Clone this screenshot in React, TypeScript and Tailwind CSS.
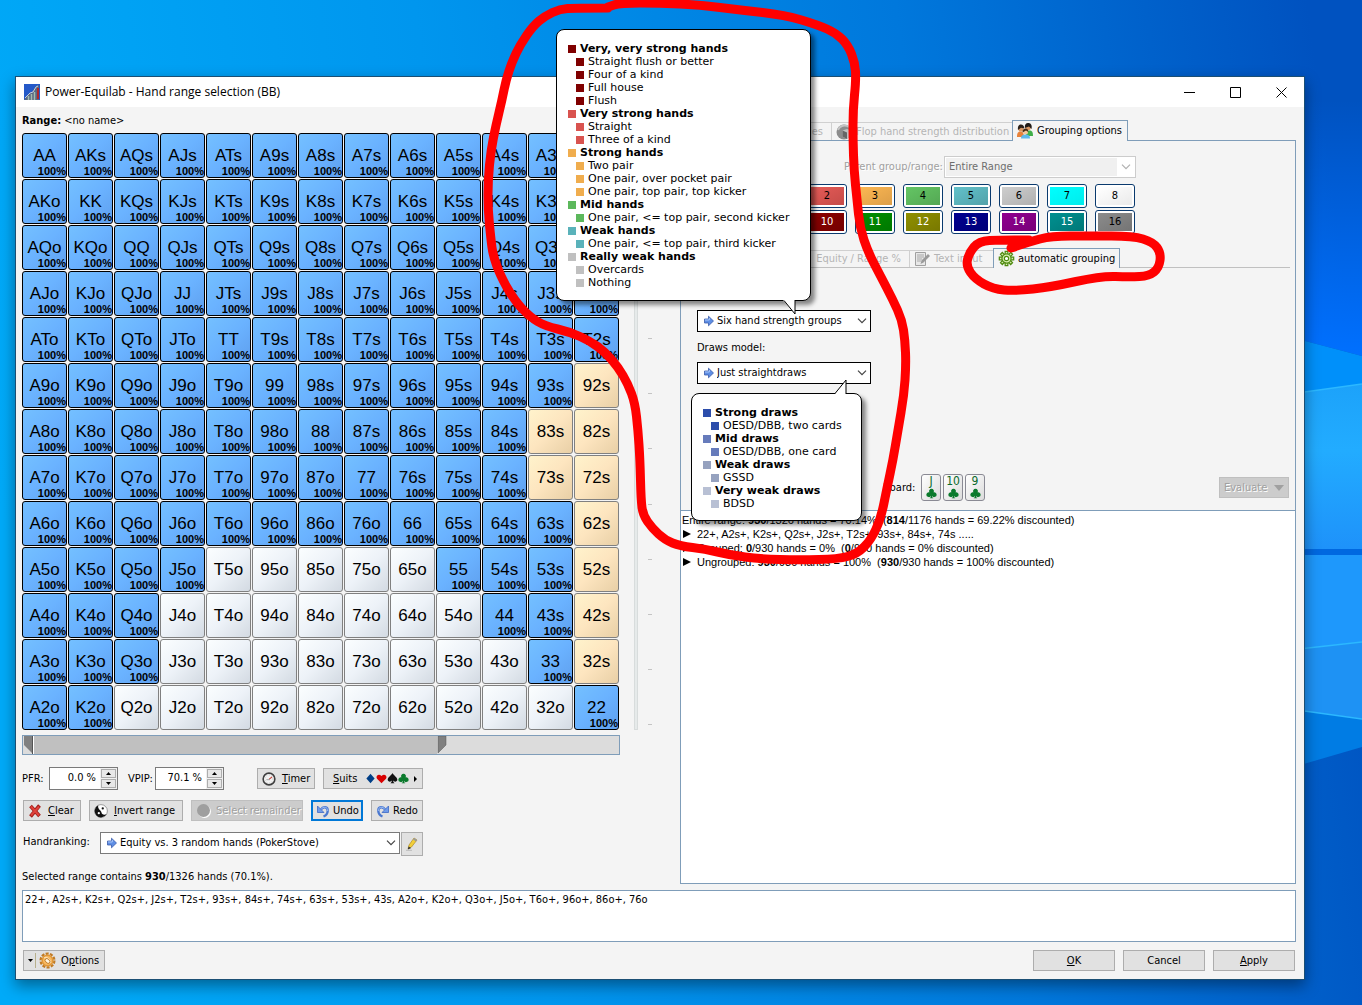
import React from 'react';

const RANKS = ['A', 'K', 'Q', 'J', 'T', '9', '8', '7', '6', '5', '4', '3', '2'];

// selected columns of each row, as start/end pairs
const SELECTED: number[][] = [
  [0, 12],
  [0, 12],
  [0, 12],
  [0, 12],
  [0, 12],
  [0, 11],
  [0, 10],
  [0, 10],
  [0, 11],
  [0, 3, 9, 11],
  [0, 2, 10, 11],
  [0, 2, 11, 11],
  [0, 1, 12, 12],
];

function isSelected(row: number, col: number) {
  const r = SELECTED[row];
  return (col >= r[0] && col <= r[1]) || (r.length > 2 && col >= r[2] && col <= r[3]);
}

function handName(row: number, col: number) {
  if (row === col) return RANKS[row] + RANKS[row];
  return row < col ? RANKS[row] + RANKS[col] + 's' : RANKS[col] + RANKS[row] + 'o';
}

type Line = { text: string; color: string; sub?: boolean };

const STRENGTH_LINES: Line[] = [
  { text: 'Very, very strong hands', color: 'bg-[#800000]' },
  { text: 'Straight flush or better', color: 'bg-[#800000]', sub: true },
  { text: 'Four of a kind', color: 'bg-[#800000]', sub: true },
  { text: 'Full house', color: 'bg-[#800000]', sub: true },
  { text: 'Flush', color: 'bg-[#800000]', sub: true },
  { text: 'Very strong hands', color: 'bg-[#d9534f]' },
  { text: 'Straight', color: 'bg-[#d9534f]', sub: true },
  { text: 'Three of a kind', color: 'bg-[#d9534f]', sub: true },
  { text: 'Strong hands', color: 'bg-[#f0ad4e]' },
  { text: 'Two pair', color: 'bg-[#f0ad4e]', sub: true },
  { text: 'One pair, over pocket pair', color: 'bg-[#f0ad4e]', sub: true },
  { text: 'One pair, top pair, top kicker', color: 'bg-[#f0ad4e]', sub: true },
  { text: 'Mid hands', color: 'bg-[#5cb85c]' },
  { text: 'One pair, <= top pair, second kicker', color: 'bg-[#5cb85c]', sub: true },
  { text: 'Weak hands', color: 'bg-[#5ab2ba]' },
  { text: 'One pair, <= top pair, third kicker', color: 'bg-[#5ab2ba]', sub: true },
  { text: 'Really weak hands', color: 'bg-[#c0c0c0]' },
  { text: 'Overcards', color: 'bg-[#c0c0c0]', sub: true },
  { text: 'Nothing', color: 'bg-[#c0c0c0]', sub: true },
];

const DRAW_LINES: Line[] = [
  { text: 'Strong draws', color: 'bg-[#2c4dab]' },
  { text: 'OESD/DBB, two cards', color: 'bg-[#2c4dab]', sub: true },
  { text: 'Mid draws', color: 'bg-[#667bbb]' },
  { text: 'OESD/DBB, one card', color: 'bg-[#667bbb]', sub: true },
  { text: 'Weak draws', color: 'bg-[#96a2bf]' },
  { text: 'GSSD', color: 'bg-[#96a2bf]', sub: true },
  { text: 'Very weak draws', color: 'bg-[#b8c0d4]' },
  { text: 'BDSD', color: 'bg-[#b8c0d4]', sub: true },
];

const GROUPS = [
  { n: 1, cls: 'from-[#4a8ad8] to-[#3a74bc] text-black' },
  { n: 2, cls: 'from-[#e65c58] to-[#c54b48] text-black' },
  { n: 3, cls: 'from-[#fdb853] to-[#dc9e48] text-black' },
  { n: 4, cls: 'from-[#64c564] to-[#54a854] text-black' },
  { n: 5, cls: 'from-[#62c1ca] to-[#52a2aa] text-black' },
  { n: 6, cls: 'from-[#cecece] to-[#b0b0b0] text-black' },
  { n: 7, cls: 'from-[#00ffff] to-[#00ecec] text-black' },
  { n: 8, cls: 'from-[#ffffff] to-[#eaeaea] text-black' },
  { n: 9, cls: 'from-[#303030] to-[#000000] text-white' },
  { n: 10, cls: 'from-[#8c0000] to-[#740000] text-white' },
  { n: 11, cls: 'from-[#009000] to-[#007800] text-white' },
  { n: 12, cls: 'from-[#909000] to-[#787800] text-white' },
  { n: 13, cls: 'from-[#000090] to-[#000078] text-white' },
  { n: 14, cls: 'from-[#900090] to-[#780078] text-white' },
  { n: 15, cls: 'from-[#009090] to-[#007878] text-white' },
  { n: 16, cls: 'from-[#8c8c8c] to-[#747474] text-black' },
];

const BTN_BASE = 'flex h-[21px] items-center whitespace-nowrap';
const BTN = `${BTN_BASE} border border-[#adadad] bg-[#e1e1e1]`;
const BTN_OFF = `${BTN_BASE} border border-[#bfbfbf] bg-[#cccccc] text-[#a0a0a0] [text-shadow:1px_1px_0_#fff]`;
const BTN_FOCUS = `${BTN_BASE} border-2 border-[#0078d7] bg-[#e1e1e1]`;

const DIAMOND = 'M8 1l6 7-6 7-6-7z';
const HEART = 'M8 15L1.500 8.500C-1 5 3.500 0 8 4.500c4.500-4.500 9 .5 6.500 4z';
const SPADE = 'M8 0C9 3 15 6 15 9.500c0 3.500-4.500 4-6 1.500 0 2 1 3.500 2 4H5c1-.5 2-2 2-4-1.500 2.500-6 2-6-1.500C1 6 7 3 8 0z';
const CLUB =
  'M8 1a3.400 3.400 0 0 0-2.900 5.300A3.500 3.500 0 1 0 7.300 11.200C7.200 13 6.500 14.200 5 15h6c-1.500-.8-2.200-2-2.300-3.800a3.500 3.500 0 1 0 2.200-4.900A3.400 3.400 0 0 0 8 1z';

function ArrowIcon() {
  return (
    <svg viewBox="0 0 12 12" className="h-3 w-3 shrink-0">
      <path d="M1.500 4h4V1.200L10.500 6l-5 4.800V8h-4z" fill="#5e8ee4" stroke="#3a5cab" strokeWidth=".8" />
      <path d="M2 5h4.300V3" fill="none" stroke="#a9c8fb" strokeWidth="1" />
    </svg>
  );
}

function AppIcon() {
  return (
    <svg viewBox="0 0 16 16" className="h-4 w-4 shrink-0">
      <rect width="16" height="16" fill="#2459c8" />
      <path d="M0 16L5 10l3-2 4-6 3-1v15z" fill="#5a6880" />
      <path d="M4.500 16v-4M7.500 16v-6M10.500 16V8" stroke="#a2bcae" strokeWidth="1.500" />
      <path d="M14 15V4" stroke="#b02a2a" strokeWidth="2" />
      <path d="M1 14l5-5 3-1 3-5 2-1" fill="none" stroke="#c5cede" strokeWidth="1" />
    </svg>
  );
}

function PeopleIcon() {
  return (
    <svg viewBox="0 0 16 16" className="h-4 w-4 shrink-0">
      <path d="M0 14c0-4 1-5.500 3.500-5.500S7 11 7 14z" fill="#e8823a" />
      <path d="M9 13c0-4 1-5.500 3.500-5.500S16 9 16 13z" fill="#3fae48" />
      <circle cx="4" cy="6" r="2.600" fill="#d99560" />
      <circle cx="11" cy="4.500" r="2.800" fill="#d99560" />
      <path d="M1 7c-.5-4 1-5.500 3-5.500s3 1 3.300 4L4 4.800z" fill="#2b2018" />
      <path d="M7.800 5C7.500 1.500 9 0 11 0s4.500 1 3.500 6l-2.500-2.500z" fill="#1f1a16" />
      <circle cx="8.500" cy="9" r="2.500" fill="#f5c79c" />
      <path d="M5.500 9.500C5.500 6.500 7 5.500 8.500 5.500s3 1 2.800 3.500L9 7.500z" fill="#4a2c14" />
      <path d="M4 15.500c0-3 1.500-4 4.500-4s4.500 1 4.500 4z" fill="#5cb8ee" />
    </svg>
  );
}

function CubeIcon() {
  return (
    <svg viewBox="0 0 16 16" className="h-4 w-4 shrink-0">
      <circle cx="8" cy="8" r="7.500" fill="#8c8c8c" />
      <path d="M2 6a7 7 0 0 1 11-3" fill="none" stroke="#c4c4c4" strokeWidth="2" />
      <path d="M6.500 6.500l4.500-1.500 4.500 1.500v6L11 15l-4.500-2.500z" fill="#c2c2c2" />
      <path d="M6.500 6.500L11 8.500V15l-4.500-2.500z" fill="#666" />
    </svg>
  );
}

function NoteIcon() {
  return (
    <svg viewBox="0 0 16 16" className="h-4 w-4 shrink-0">
      <path d="M1.500 1.500h10v13h-10z" fill="#e8e8e8" stroke="#a0a0a0" />
      <path d="M3 4h7M3 6h7M3 8h5M3 10h4" stroke="#a8a8a8" />
      <path d="M6.500 13l1-3.500L14 3l2 2-6.500 6.500z" fill="#9a9a9a" />
    </svg>
  );
}

function GearIcon({ color, fill }: { color: string; fill: string }) {
  return (
    <svg viewBox="0 0 18 18" className="h-[17px] w-[17px] shrink-0">
      {[0, 45, 90, 135, 180, 225, 270, 315].map((a) => (
        <path key={a} d="M7.600 4.200V1.400h2.800v2.800" fill={fill} stroke={color} strokeWidth="1.300" transform={`rotate(${a} 9 9)`} />
      ))}
      <circle cx="9" cy="9" r="4.800" fill={fill} stroke={color} strokeWidth="1.300" />
      <circle cx="9" cy="9" r="2.300" fill="#fff" stroke={color} strokeWidth="1.200" />
    </svg>
  );
}

function OptionsIcon() {
  return (
    <svg viewBox="0 0 18 18" className="h-[17px] w-[17px] shrink-0">
      <circle cx="9" cy="9" r="7.300" fill="none" stroke="#c07a24" strokeWidth="2.400" strokeDasharray="3.200 1.400" />
      <circle cx="9" cy="9" r="5.600" fill="#f8b860" stroke="#e09838" strokeWidth="1.600" />
      <path d="M5.500 6.500C8 4.500 11.500 8 12.500 11.500" fill="none" stroke="#fbe0b4" strokeWidth="1.500" />
      <ellipse cx="9" cy="9.500" rx="3" ry="2" fill="#fff4e0" stroke="#b87420" strokeWidth=".9" transform="rotate(45 9 9.500)" />
    </svg>
  );
}

function ClockIcon() {
  return (
    <svg viewBox="0 0 16 16" className="h-[14px] w-[14px] shrink-0">
      <circle cx="8" cy="8" r="6.700" fill="#f2f2f2" stroke="#3f3f3f" strokeWidth="1.800" />
      <circle cx="8" cy="8" r="4.600" fill="none" stroke="#b9b9b9" strokeDasharray="1 2" />
      <path d="M11.500 5.500L8 8.500" stroke="#c23a2e" strokeWidth="1.200" />
      <path d="M5 8.800h4" stroke="#999" />
    </svg>
  );
}

function CrossIcon() {
  return (
    <svg viewBox="0 0 14 14" className="h-[14px] w-[14px] shrink-0">
      <path d="M2.500 2L11.500 12M11.500 1.500L2.500 12.500" stroke="#a11c18" strokeWidth="3.600" />
      <path d="M3 2.500L11 11.500M11 2.500L3 11.500" stroke="#e0423c" strokeWidth="2" />
    </svg>
  );
}

function YinYangIcon() {
  return (
    <svg viewBox="0 0 16 16" className="h-[14px] w-[14px] shrink-0">
      <circle cx="8" cy="8" r="7.300" fill="#fff" stroke="#777" strokeWidth=".8" />
      <path d="M5 1.400A7.300 7.300 0 1 0 14.500 11.500C12 13.500 8.500 12 8.500 9.500S3.500 6 5 1.400z" fill="#111" />
      <circle cx="10" cy="5" r="1.300" fill="#111" />
      <circle cx="5.500" cy="10.500" r="1.300" fill="#fff" />
    </svg>
  );
}

function UndoIcon({ flip }: { flip?: boolean }) {
  return (
    <svg viewBox="0 0 14 14" className="h-[14px] w-[14px] shrink-0">
      <g transform={flip ? 'matrix(-1 0 0 1 14 0)' : undefined}>
        <path d="M5 5.500C7 2 12 2.500 11.700 7c-.2 3-1.700 4.500-4.200 5.500" fill="none" stroke="#4a78d0" strokeWidth="2.400" />
        <path d="M5 5.500C7 2 12 2.500 11.700 7" fill="none" stroke="#9cbdf6" strokeWidth="1" />
        <path d="M1.500 2v6.500H8z" fill="#6f9bea" stroke="#3c68c4" strokeWidth=".8" />
      </g>
    </svg>
  );
}

function PencilIcon() {
  return (
    <svg viewBox="0 0 14 14" className="h-[14px] w-[14px] shrink-0">
      <path d="M3 12l1-4 5-7 3 2-5.500 7z" fill="#f2cf3a" stroke="#a57f1c" strokeWidth=".6" />
      <path d="M9 1l3.200 2-1.200 1.600-3-2z" fill="#9b9b9b" />
      <path d="M2.800 12.500l.8-3L6.200 11z" fill="#333" />
      <path d="M1 13.300h6" stroke="#bbb" />
    </svg>
  );
}

function Suit({ d, color }: { d: string; color: string }) {
  return (
    <svg viewBox="0 0 16 16" className="h-[11px] w-[11px] shrink-0">
      <path d={d} fill={color} />
    </svg>
  );
}

function Chevron({ color }: { color: string }) {
  return (
    <svg viewBox="0 0 10 6" className="pointer-events-none h-[6px] w-[10px] shrink-0">
      <path d="M1 .7l4 4 4-4" fill="none" stroke={color} strokeWidth="1.200" />
    </svg>
  );
}

function Combo({ id, label, value, className }: { id: string; label: string; value: string; className: string }) {
  return (
    <div className={`flex h-[22px] items-center border bg-white pr-[3px] pl-[5px] ${className}`}>
      <ArrowIcon />
      <select id={id} aria-label={label} className="min-w-0 flex-1 appearance-none bg-transparent pl-[2px] whitespace-pre outline-none">
        <option>{value}</option>
      </select>
      <Chevron color="#444" />
    </div>
  );
}

function Spinner({ id, label, value }: { id: string; label: string; value: string }) {
  return (
    <div className="flex items-center">
      <label htmlFor={id} className="w-[27px]">{label}</label>
      <div className="flex h-[23px] w-[69px] border border-[#7a7a7a] bg-white">
        <input id={id} defaultValue={value} className="h-[19px] w-[50px] pr-1 text-right outline-none" />
        <div className="flex flex-1 flex-col gap-px bg-[#f0f0f0] p-px">
          <button type="button" aria-label={`${label} up`} className="flex flex-1 items-center justify-center border border-[#adadad] bg-[#e8e8e8]">
            <svg viewBox="0 0 5 3" className="h-[3px] w-[5px]"><path d="M0 3L2.500 0 5 3z" /></svg>
          </button>
          <button type="button" aria-label={`${label} down`} className="flex flex-1 items-center justify-center border border-[#adadad] bg-[#e8e8e8]">
            <svg viewBox="0 0 5 3" className="h-[3px] w-[5px]"><path d="M0 0L2.500 3 5 0z" /></svg>
          </button>
        </div>
      </div>
    </div>
  );
}

function HandCell({ row, col }: { row: number; col: number }) {
  const on = isSelected(row, col);
  let look = 'border-[#808080] from-[#fbfeff] via-[#edf2f8] to-[#d3dae2]';
  if (on) look = 'border-black from-[#74c0ff] via-[#6ab2ff] to-[#5f9fee]';
  else if (row < col) look = 'border-[#808080] from-[#fff3cc] via-[#fde5bf] to-[#e8cfa6]';
  return (
    <button type="button" className={`flex h-[45px] flex-col rounded-[3px] border bg-linear-to-br pt-[10px] ${look}`}>
      <span className="w-full text-center text-[17px] leading-[23px]">{handName(row, col)}</span>
      {on && <span className="w-full text-right text-[11px] leading-[9px] font-bold">100%</span>}
    </button>
  );
}

function Bubble({ lines, className, children }: { lines: Line[]; className: string; children: React.ReactNode }) {
  return (
    <div className={`absolute rounded-lg border border-black bg-white px-[11px] py-[12px] font-['DejaVu_Sans',sans-serif] text-[11px] leading-[13px] whitespace-nowrap text-black shadow-[4px_4px_4px_rgba(0,0,0,0.45)] ${className}`}>
      <ul>
        {lines.map((l) => (
          <li key={l.text} className={l.sub ? 'flex items-center gap-1 pl-2' : 'flex items-center gap-1 font-bold'}>
            <span className={`h-2 w-2 shrink-0 ${l.color}`} />
            {l.text}
          </li>
        ))}
      </ul>
      {children}
    </div>
  );
}

function Wallpaper() {
  return (
    <svg viewBox="0 0 1362 1005" preserveAspectRatio="none" className="absolute inset-0 h-full w-full">
      <defs>
        <linearGradient id="sky" x1="0" y1="0.500" x2="1" y2="0.400">
          <stop offset="0" stopColor="#00aaf8" />
          <stop offset="0.350" stopColor="#0096ee" />
          <stop offset="0.700" stopColor="#0078dc" />
          <stop offset="1" stopColor="#0052c0" />
        </linearGradient>
        <linearGradient id="glow" x1="0" y1="0" x2="0" y2="1">
          <stop offset="0" stopColor="#0070ff" stopOpacity="0" />
          <stop offset="1" stopColor="#0070ff" />
        </linearGradient>
        <linearGradient id="beam" x1="0" y1="0" x2="0" y2="1">
          <stop offset="0" stopColor="#1ca2fa" />
          <stop offset="0.400" stopColor="#22acff" />
          <stop offset="1" stopColor="#1e92fa" />
        </linearGradient>
      </defs>
      <rect width="1362" height="1005" fill="url(#sky)" />
      <path d="M1290 100H1362V356L1290 337z" fill="url(#glow)" />
      <path d="M1290 337L1362 356V385L1290 394z" fill="#0090fa" />
      <path d="M1290 394L1362 384V549H1290z" fill="url(#beam)" />
      <path d="M1290 549H1362V555H1290z" fill="#0068e0" />
      <path d="M1290 555H1362V642L1290 650z" fill="#1e98fc" />
      <path d="M1290 650L1362 642V719L1290 709z" fill="#1e92f4" />
      <path d="M1290 709L1362 719V747L1290 768z" fill="#007ce4" />
      <path d="M1290 394L1362 384M1290 650L1362 642M1290 709L1362 719" stroke="#2cb8ff" strokeWidth="1.500" />
    </svg>
  );
}

// smooth stroke through the midpoints of x,y pairs
function penPath(p: number[]) {
  let d = `M${p[0]} ${p[1]}`;
  for (let i = 2; i < p.length - 2; i += 2) {
    d += `Q${p[i]} ${p[i + 1]} ${(p[i] + p[i + 2]) / 2} ${(p[i + 1] + p[i + 3]) / 2}`;
  }
  return d + `L${p[p.length - 2]} ${p[p.length - 1]}`;
}

const BIG_LOOP = [
  608, 8, 575, 8, 560, 9, 545, 16, 533, 26, 520, 45, 512, 62, 506, 80, 502, 100, 496, 125, 491, 150, 488, 180, 488, 210, 491, 240,
  493, 255, 500, 275, 514, 300, 530, 317, 545, 326, 570, 332, 590, 341, 605, 352, 618, 367, 628, 384, 635, 403, 638, 430, 640, 460,
  641, 500, 643, 515, 652, 528, 665, 540, 680, 546, 705, 549, 730, 555, 760, 559, 800, 560, 838, 559, 857, 554, 871, 540, 881, 518,
  887, 488, 893, 460, 898, 430, 904, 395, 906, 365, 905, 340, 902, 320, 893, 300, 880, 275, 868, 252, 860, 228, 857, 200, 854, 170,
  853, 140, 853, 110, 856, 80, 855, 63, 848, 45, 836, 33, 818, 25, 785, 15, 740, 10, 700, 5, 660, 3, 620, 3, 608, 7,
];
const TAB_LOOP = [
  1011, 248, 1029, 242, 1051, 236, 1090, 236, 1133, 236, 1153, 242, 1161, 253, 1159, 268, 1149, 276, 1130, 277, 1101, 276, 1051, 287,
  1015, 291, 993, 289, 975, 279, 966, 266, 969, 253, 979, 241, 1000, 240, 1029, 240,
];

function Results() {
  return (
    <div className="flex-1 border-t border-[#7f9db9] bg-white pt-[2px] pl-px font-['Liberation_Sans',sans-serif] text-[11px] leading-[14px] whitespace-pre">
      <p>Entire range: <b>930</b>/1326 hands = 70.14%  (<b>814</b>/1176 hands = 69.22% discounted)</p>
      {[
        <>22+, A2s+, K2s+, Q2s+, J2s+, T2s+, 93s+, 84s+, 74s .....</>,
        <>Grouped: <b>0</b>/930 hands = 0%  (<b>0</b>/930 hands = 0% discounted)</>,
        <>Ungrouped: <b>930</b>/930 hands = 100%  (<b>930</b>/930 hands = 100% discounted)</>,
      ].map((row, i) => (
        <p key={i} className="flex items-center gap-[6px] pl-px">
          <svg viewBox="0 0 8 8" className="h-2 w-2"><path d="M0 0l8 4-8 4z" /></svg>
          <span>{row}</span>
        </p>
      ))}
    </div>
  );
}

export default function App() {
  return (
    <div className="relative min-h-screen overflow-hidden bg-[#0090e8] pt-[76px] pr-[57px] pb-[25px] pl-[15px] font-['DejaVu_Sans_Condensed','Noto_Sans',sans-serif] text-[11px] leading-[14px] text-black">
      <Wallpaper />

      <div className="relative flex flex-col border border-[#1b4f74] bg-[#f4f4f4] shadow-[0_6px_14px_rgba(0,0,0,0.4)]">
        <header className="flex h-[30px] items-center bg-white pl-2">
          <AppIcon />
          <h1 className="ml-[5px] flex-1 font-['Open_Sans',sans-serif] text-[12px]">Power-Equilab - Hand range selection (BB)</h1>
          <button type="button" aria-label="Minimize" className="flex w-[45px] justify-center">
            <svg viewBox="0 0 11 11" className="h-[11px] w-[11px]"><path d="M0 5.500h11" stroke="#000" /></svg>
          </button>
          <button type="button" aria-label="Maximize" className="flex w-[46px] justify-center">
            <svg viewBox="0 0 11 11" className="h-[11px] w-[11px]"><path d="M.5.5h10v10H.5z" fill="none" stroke="#000" /></svg>
          </button>
          <button type="button" aria-label="Close" className="flex w-[46px] justify-center">
            <svg viewBox="0 0 11 11" className="h-[11px] w-[11px]"><path d="M.5.5l10 10M10.500.5l-10 10" stroke="#000" /></svg>
          </button>
        </header>

        <div className="flex pr-2 pl-[6px]">
          {/* hand matrix and the controls under it */}
          <section className="w-[598px] shrink-0 pt-[7px]">
            <p className="h-[19px]"><b>Range:</b> &lt;no name&gt;</p>
            <div className="grid w-[597px] grid-cols-13 gap-px font-['Liberation_Sans',sans-serif]">
              {RANKS.map((_, row) => RANKS.map((__, col) => <HandCell key={`${row}-${col}`} row={row} col={col} />))}
            </div>

            <div className="mt-[5px] flex h-5 border border-[#7f9db9] bg-[#dcdcdc]">
              <svg viewBox="0 0 10 18" className="h-[18px] w-[10px]">
                <path d="M1 0h8v17L1 9z" fill="#808080" />
                <path d="M9.500 0v18" stroke="#555" />
              </svg>
              <div className="w-[404px] border-l border-white bg-[#c0c0c0]" />
              <svg viewBox="0 0 10 18" className="h-[18px] w-[10px]">
                <path d="M1 0h8v9l-8 8z" fill="#808080" stroke="#555" strokeWidth=".5" />
              </svg>
            </div>

            <div className="mt-[12px] flex h-[23px] w-[401px] items-center">
              <Spinner id="pfr" label="PFR:" value="0.0 %" />
              <div className="ml-[10px] flex-1"><Spinner id="vpip" label="VPIP:" value="70.1 %" /></div>
              <button type="button" className={`${BTN} w-[58px] gap-[6px] pl-1`}>
                <ClockIcon /><span><u>T</u>imer</span>
              </button>
              <button type="button" className={`${BTN} ml-2 w-[100px] pl-[9px]`}>
                <span className="mr-2"><u>S</u>uits</span>
                <Suit color="#003f87" d={DIAMOND} />
                <Suit color="#d80000" d={HEART} />
                <Suit color="#111" d={SPADE} />
                <Suit color="#0a7a2c" d={CLUB} />
                <svg viewBox="0 0 3 6" className="ml-[5px] h-[6px] w-[3px]"><path d="M0 0l3 3-3 3z" /></svg>
              </button>
            </div>

            <div className="mt-[10px] ml-px flex gap-2">
              <button type="button" className={`${BTN} w-[58px] gap-[6px] pl-1`}>
                <CrossIcon /><span><u>C</u>lear</span>
              </button>
              <button type="button" className={`${BTN} w-[94px] gap-[6px] pl-1`}>
                <YinYangIcon /><span><u>I</u>nvert range</span>
              </button>
              <button type="button" disabled className={`${BTN_OFF} w-[112px] gap-[6px] pl-[5px]`}>
                <span className="h-[13px] w-[13px] shrink-0 rounded-full bg-[#9f9f9f] shadow-[1px_1px_0_#fff]" />Select remainder
              </button>
              <button type="button" className={`${BTN_FOCUS} w-[52px] gap-[3px] pl-[3px]`}>
                <UndoIcon />Undo
              </button>
              <button type="button" className={`${BTN} w-[52px] gap-[3px] pl-[4px]`}>
                <UndoIcon flip />Redo
              </button>
            </div>

            <div className="mt-[11px] ml-px flex w-[400px]">
              <label htmlFor="ranking" className="w-[77px] pt-[3px]">Handranking:</label>
              <Combo id="ranking" label="Handranking" value="Equity vs. 3 random hands (PokerStove)" className="flex-1 border-[#7a7a7a]" />
              <button type="button" aria-label="Edit hand ranking" className="ml-px flex h-6 w-[22px] items-center justify-center border border-[#adadad] bg-[#e1e1e1]">
                <PencilIcon />
              </button>
            </div>

            <p className="mt-[14px] mb-[6px]">Selected range contains <b>930</b>/1326 hands (70.1%).</p>
          </section>

          {/* vertical zoom track */}
          <div className="flex w-[60px] shrink-0 gap-[10px] pt-[26px] pb-[160px] pl-[14px]">
            <div className="w-1 border border-[#d8dcdc] bg-[#e6eaea]" />
            <div className="flex w-1 flex-col justify-between pt-[40px] pb-[5px]">
              {Array.from({ length: 11 }, (_, i) => <span key={i} className="h-px bg-[#c4c4c4]" />)}
            </div>
          </div>

          <section className="mb-[6px] flex min-w-0 flex-1 flex-col pt-[13px]">
            <div className="flex h-5 items-end text-[#b4b4b4]">
              <button type="button" disabled className="flex h-[18px] w-[151px] items-center justify-end border-t border-l border-[#d0d0d0] pr-2">Equities</button>
              <button type="button" disabled className="flex h-[18px] w-[181px] items-center gap-1 border-t border-l border-[#d0d0d0] pl-1 whitespace-nowrap">
                <CubeIcon />Flop hand strength distribution
              </button>
              <button type="button" className="z-10 -mb-px flex h-[21px] w-[116px] items-center gap-1 border border-b-0 border-[#7f9db9] bg-[#f4f4f4] pl-1 whitespace-nowrap text-black">
                <PeopleIcon />Grouping options
              </button>
            </div>

            <div className="flex flex-1 flex-col border border-[#7f9db9]">
              <div className="mt-[15px] ml-[163px] flex items-center">
                <label htmlFor="parent" className="w-[100px] whitespace-nowrap text-[#a0a0a0] [text-shadow:1px_1px_0_#fff]">Parent group/range:</label>
                <div className="flex h-[22px] w-[192px] items-center border border-[#cccccc] bg-white p-px pr-1">
                  <select id="parent" disabled className="h-full flex-1 appearance-none bg-[#f0f0f0] pl-[3px] text-[#6d6d6d] opacity-100">
                    <option>Entire Range</option>
                  </select>
                  <span className="ml-1"><Chevron color="#b0b0b0" /></span>
                </div>
              </div>

              <div className="mt-[6px] ml-[78px] grid w-[376px] grid-cols-8 gap-x-2 gap-y-[2px]">
                {GROUPS.map((g) => (
                  <button key={g.n} type="button" className="h-6 rounded-[3px] border border-[#0a3a6e] bg-white p-[2px]">
                    <span className={`flex h-full items-center justify-center bg-linear-to-br ${g.cls}`}>{g.n}</span>
                  </button>
                ))}
              </div>

              <div className="mt-[14px] mr-[5px] flex h-5 items-end border-b border-[#c0c0c0] text-[#b4b4b4]">
                <button type="button" disabled className="flex h-[17px] w-[229px] items-center justify-end border-t border-r border-[#d0d0d0] pr-2">Equity / Range %</button>
                <button type="button" disabled className="flex h-[17px] w-[83px] items-center gap-1 border-t border-[#d0d0d0] pl-1 whitespace-nowrap">
                  <NoteIcon />Text input
                </button>
                <button type="button" className="-mb-px flex h-5 w-[127px] items-center gap-[3px] border border-b-0 border-[#7f9db9] bg-[#f4f4f4] pl-1 whitespace-nowrap text-black">
                  <GearIcon color="#4f8a10" fill="#d8f0b0" />automatic grouping
                </button>
              </div>

              <div className="mt-[42px] ml-4">
                <Combo id="strength" label="Hand strength model" value="Six hand strength  groups" className="w-[174px] border-black" />
                <label htmlFor="draws" className="mt-[9px] mb-[7px] block">Draws model:</label>
                <Combo id="draws" label="Draws model" value="Just straightdraws" className="w-[174px] border-black" />
              </div>

              <div className="mt-[90px] mb-[9px] flex items-center gap-[2px] pr-[6px] pl-[202px]">
                <span className="mr-[2px] w-[34px]">Board:</span>
                {['J', '10', '9'].map((c) => (
                  <button key={c} type="button" className="flex h-[27px] w-5 flex-col items-center rounded-[3px] border border-[#8a8a94] bg-linear-to-br from-white to-[#dcdcdc] text-[12px] leading-[13px] text-[#0a6a2c]">
                    {c}
                    <Suit color="#0a7a2c" d={CLUB} />
                  </button>
                ))}
                <button type="button" disabled className={`${BTN_OFF} ml-auto w-[70px] justify-between px-1`}>
                  Evaluate
                  <svg viewBox="0 0 10 6" className="h-[6px] w-[10px]"><path d="M0 0h10L5 6z" fill="#a0a0a0" /></svg>
                </button>
              </div>

              <Results />
            </div>
          </section>
        </div>

        <textarea
          aria-label="Range text"
          className="mr-2 ml-[6px] h-[52px] resize-none border border-[#7f9db9] bg-white px-[2px] py-[2px] outline-none"
          defaultValue="22+, A2s+, K2s+, Q2s+, J2s+, T2s+, 93s+, 84s+, 74s+, 63s+, 53s+, 43s, A2o+, K2o+, Q3o+, J5o+, T6o+, 96o+, 86o+, 76o"
        />

        <footer className="flex gap-2 py-2 pr-[9px] pl-[7px]">
          <button type="button" className={`${BTN} mr-auto w-[82px] pl-1`}>
            <svg viewBox="0 0 5 3" className="h-[3px] w-[5px]"><path d="M0 0h5L2.500 3z" /></svg>
            <span className="mr-[3px] ml-[2px] h-[15px] w-px bg-[#b8b08c]" />
            <OptionsIcon />
            <span className="ml-[5px]">O<u>p</u>tions</span>
          </button>
          <button type="button" className={`${BTN} w-[82px] justify-center`}><u>O</u>K</button>
          <button type="button" className={`${BTN} w-[82px] justify-center`}>Cancel</button>
          <button type="button" className={`${BTN} w-[82px] justify-center`}><u>A</u>pply</button>
        </footer>
      </div>

      <Bubble lines={STRENGTH_LINES} className="top-[29px] left-[556px] h-[272px] w-[255px]">
        <svg viewBox="0 0 13 16" className="absolute top-[269px] left-[226px] h-4 w-[13px]">
          <path d="M0 0h12v15L0 1z" fill="#fff" />
          <path d="M1 1.500L12 15V1" fill="none" stroke="#000" />
        </svg>
      </Bubble>
      <Bubble lines={DRAW_LINES} className="top-[393px] left-[691px] h-[128px] w-[171px]">
        <svg viewBox="0 0 13 16" className="absolute -top-[15px] left-[142px] h-4 w-[13px]">
          <path d="M1 15L12 1v15H1z" fill="#fff" />
          <path d="M1 14.500L12 1v14" fill="none" stroke="#000" />
        </svg>
      </Bubble>

      {/* red pen marks */}
      <svg viewBox="0 0 1362 1005" className="pointer-events-none absolute top-0 left-0 h-[1005px] w-[1362px]">
        <g fill="none" stroke="#ff0000" strokeWidth="9" strokeLinejoin="round" strokeLinecap="round">
          <path d={penPath(BIG_LOOP)} />
          <path d={penPath(TAB_LOOP)} />
        </g>
      </svg>
    </div>
  );
}
